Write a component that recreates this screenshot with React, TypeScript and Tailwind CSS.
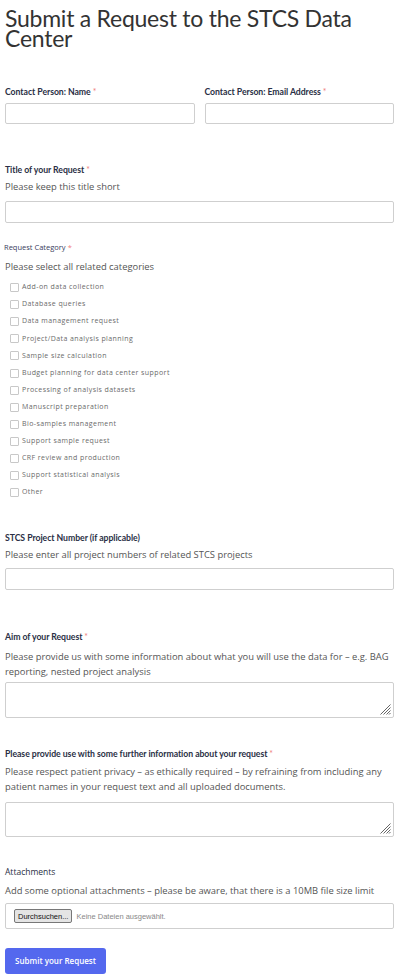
import React from "react";

const CATEGORIES = [
  "Add-on data collection",
  "Database queries",
  "Data management request",
  "Project/Data analysis planning",
  "Sample size calculation",
  "Budget planning for data center support",
  "Processing of analysis datasets",
  "Manuscript preparation",
  "Bio-samples management",
  "Support sample request",
  "CRF review and production",
  "Support statistical analysis",
  "Other",
];

const Label = ({ text, required, className = "" }: { text: string; required?: boolean; className?: string }) => (
  <div className={`h-[12px] text-[8.7px] leading-[12px] font-bold text-[#2a2f45] font-['Lato'] tracking-[-0.05px] ${className}`}>
    {text}
    {required && <span className="text-[#f08080] font-normal ml-[2px]">*</span>}
  </div>
);

const Desc = ({ children, className = "" }: { children: React.ReactNode; className?: string }) => (
  <p className={`text-[9.4px] leading-[15px] text-[#555] font-['Open_Sans'] ${className}`}>{children}</p>
);

const inputCls = "block w-full border border-[#cfcfcf] rounded-[2px] bg-white outline-none";

// drawn grip, the native one is much smaller than the one in the design
const Grip = () => (
  <svg className="absolute right-[3px] bottom-[3px] pointer-events-none" width="11" height="11" viewBox="0 0 11 11">
    <g stroke="#666" strokeWidth="1">
      <line x1="10.5" y1="0.5" x2="0.5" y2="10.5" />
      <line x1="10.5" y1="3.5" x2="3.5" y2="10.5" />
      <line x1="10.5" y1="6.5" x2="6.5" y2="10.5" />
      <line x1="10.5" y1="9" x2="9" y2="10.5" />
    </g>
  </svg>
);

const TextArea = ({ className = "" }: { className?: string }) => (
  <div className={`relative ${className}`}>
    <textarea className={`${inputCls} h-full resize-none`} />
    <Grip />
  </div>
);

const App = () => {
  return (
    <div className="bg-white w-[407px] min-h-[978px] px-[5px] font-['Open_Sans']">
      <div className="w-[389px]">
        <h1 className="pt-[8px] text-[23px] leading-[20px] text-[#333] font-['Lato'] font-normal tracking-[-0.25px]">
          Submit a Request to the STCS Data Center
        </h1>

        <div className="mt-[38px] grid grid-cols-2 gap-[10px]">
          <div>
            <Label text="Contact Person: Name" required />
            <input className={`${inputCls} mt-[5px] h-[21px]`} />
          </div>
          <div>
            <Label text="Contact Person: Email Address" required />
            <input className={`${inputCls} mt-[5px] h-[21px]`} />
          </div>
        </div>

        <Label text="Title of your Request" required className="mt-[40px]" />
        <Desc className="mt-[3px]">Please keep this title short</Desc>
        <input className={`${inputCls} mt-[7px] h-[22px]`} />

        <div className="mt-[18px] -ml-[1px] h-[12px] text-[7.5px] leading-[12px] text-[#3a4060] font-['Open_Sans']">
          Request Category<span className="text-[#f08080] ml-[2px]">*</span>
        </div>
        <Desc className="mt-[6px]">Please select all related categories</Desc>

        <div className="mt-[5px] pl-[5px]">
          {CATEGORIES.map((c) => (
            <label key={c} className="flex items-center h-[17.1px]">
              <span className="w-[9px] h-[9px] border border-[#c8c8c8] rounded-[1px] bg-white shrink-0" />
              <span className="ml-[3px] text-[7px] text-[#6a6a6a] font-['Open_Sans'] tracking-[0.42px]">{c}</span>
            </label>
          ))}
        </div>

        <Label text="STCS Project Number (if applicable)" className="mt-[31px]" />
        <Desc className="mt-[3px]">Please enter all project numbers of related STCS projects</Desc>
        <input className={`${inputCls} mt-[6px] h-[22px]`} />

        <Label text="Aim of your Request" required className="mt-[41px]" />
        <Desc className="mt-[6px]">
          Please provide us with some information about what you will use the data for – e.g. BAG reporting, nested project analysis
        </Desc>
        <TextArea className="mt-[3px] h-[36px]" />

        <Label text="Please provide use with some further information about your request" required className="mt-[30px]" />
        <Desc className="mt-[4px]">
          Please respect patient privacy – as ethically required – by refraining from including any patient names in your request text and all uploaded documents.
        </Desc>
        <TextArea className="mt-[8px] h-[35px]" />

        <div className="mt-[29px] h-[12px] text-[8.5px] leading-[12px] text-[#2a2f45] font-['Open_Sans']">Attachments</div>
        <Desc className="mt-[5px]">Add some optional attachments – please be aware, that there is a 10MB file size limit</Desc>
        <div className={`${inputCls} mt-[5px] h-[26px] flex items-center pl-[8px]`}>
          <span className="h-[14px] px-[3px] flex items-center border border-[#777] rounded-[2px] bg-[#e4e4e4] text-[7.5px] text-[#111] font-['Liberation_Sans']">
            Durchsuchen...
          </span>
          <span className="ml-[4px] text-[7.5px] text-[#888] font-['Liberation_Sans']">Keine Dateien ausgewählt.</span>
        </div>

        <button className="mt-[19px] h-[26px] w-[101px] rounded-[3px] bg-[#5468ee] text-white text-[8px] font-['Open_Sans'] font-semibold">
          Submit your Request
        </button>
      </div>
    </div>
  );
};

export default App;
